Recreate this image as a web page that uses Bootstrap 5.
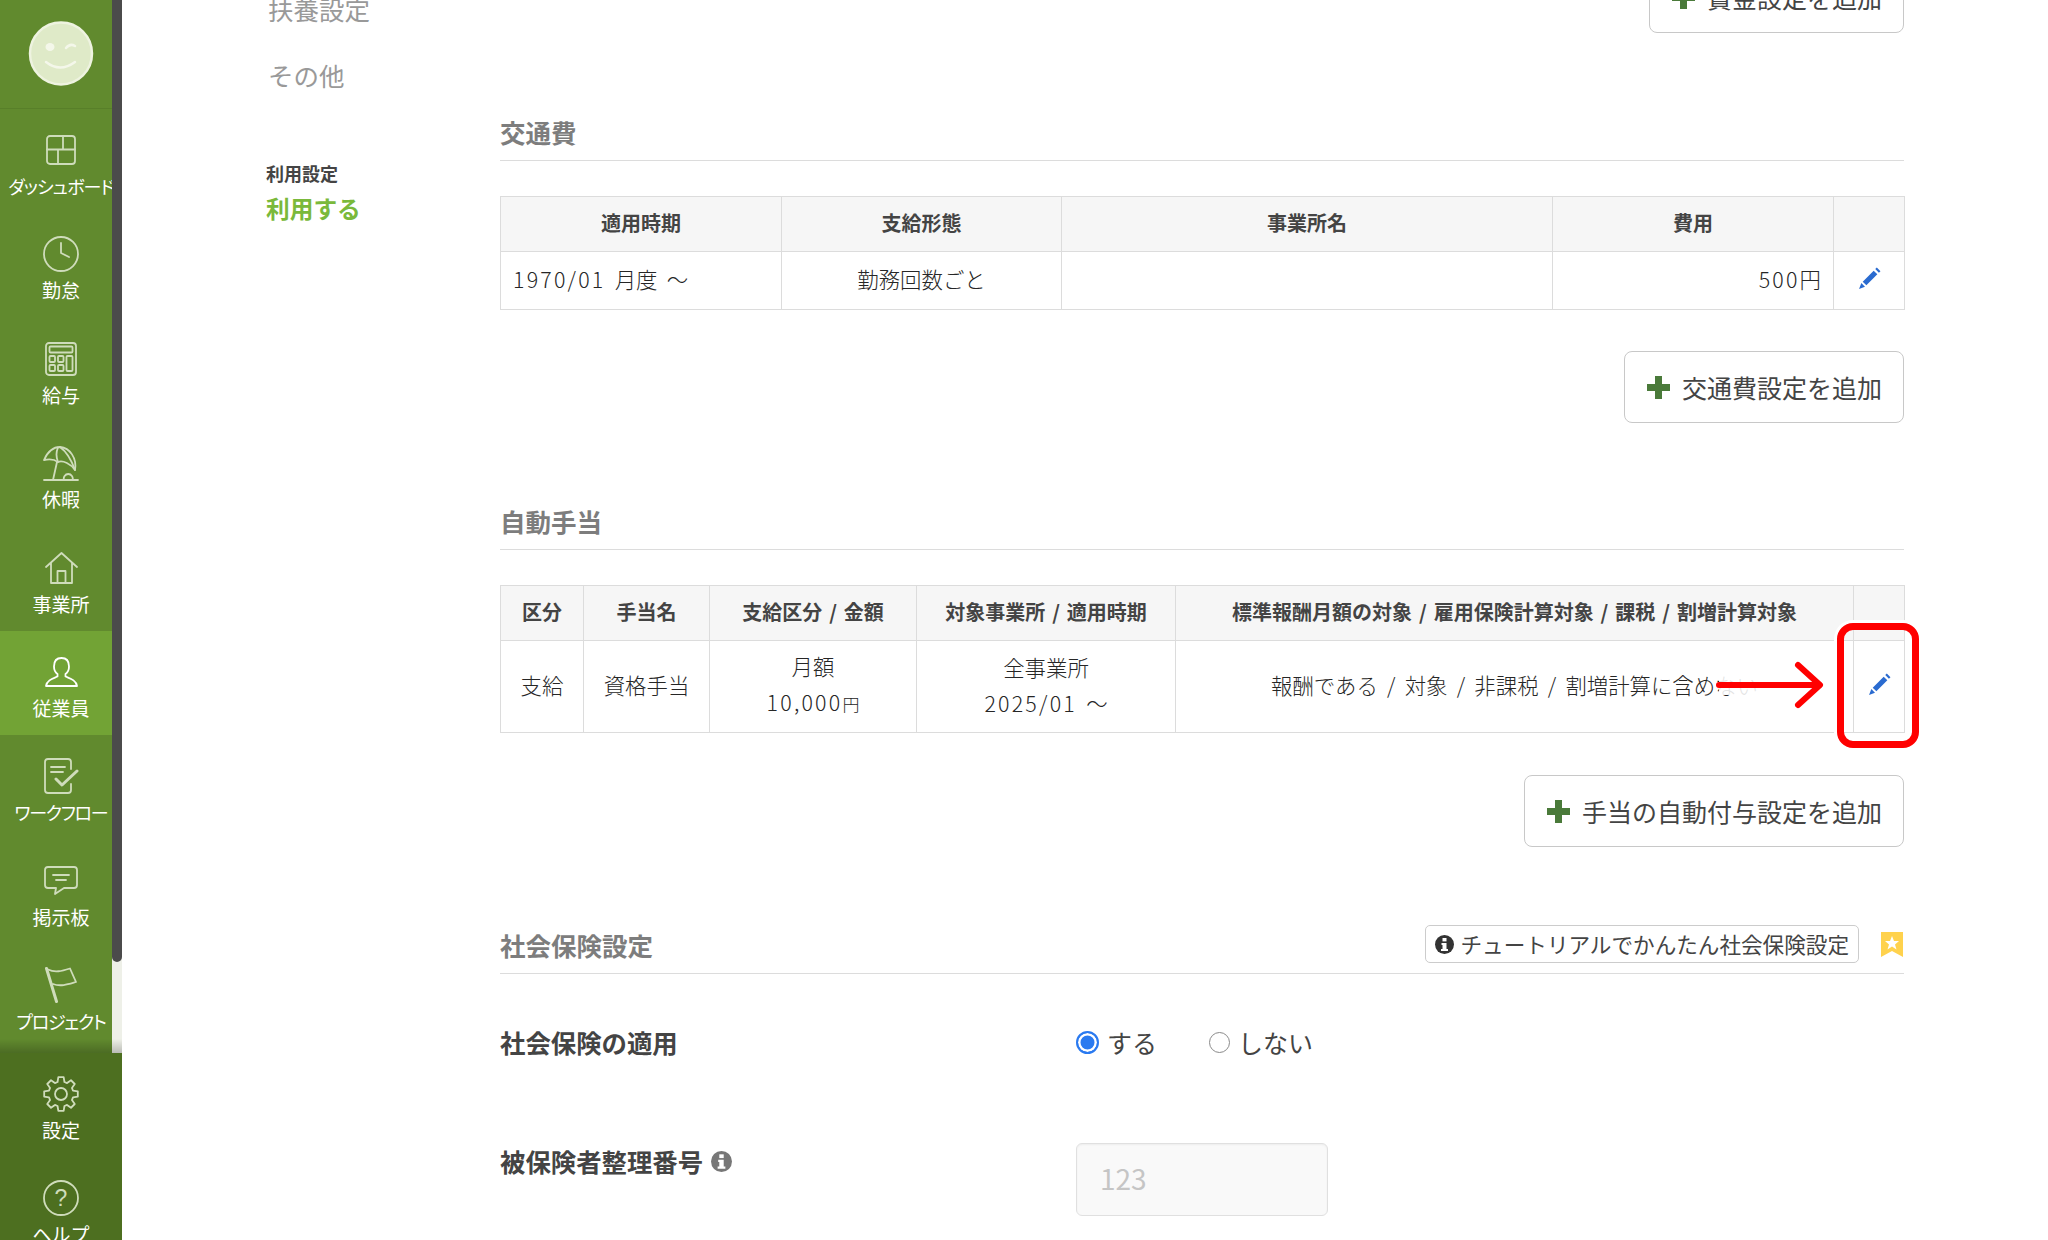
<!doctype html>
<html lang="ja">
<head>
<meta charset="utf-8">
<title>従業員設定</title>
<link rel="stylesheet" href="https://cdn.jsdelivr.net/npm/bootstrap@5.3.0/dist/css/bootstrap.min.css">
<style>
html,body{height:100%;margin:0}
body{font-family:"Noto Sans CJK JP","Noto Sans",sans-serif;color:#333;background:#fff;overflow:hidden}
.shell{height:1240px;overflow:hidden}
.side{width:122px;flex:none;background:#4d6f20;height:1240px;overflow:hidden}
.side-upper{height:1053px;flex:none;position:relative;overflow:hidden;background:#618a2e}
.side-upper::after{content:"";position:absolute;left:0;right:0;bottom:0;height:14px;background:linear-gradient(rgba(0,0,0,0),rgba(0,0,0,.22))}
.logo-box{height:109px;border-bottom:1px solid #587f29;padding-top:21px}
.track{position:absolute;right:0;top:0;bottom:0;width:10px;background:#eef0e8}
.thumb{height:962px;background:#4b4b4b;border-radius:0 0 5px 5px}
.nav-cell{height:104.4px;padding-top:23px;color:#fff;font-size:19px;line-height:24px;white-space:nowrap}
.nav-cell.on{background:#72a335}
.nav-cell .ico-box{height:36px;margin-bottom:6px}
.nav-cell svg{fill:none;stroke:#cfdcbb;stroke-width:1.8;stroke-linecap:round;stroke-linejoin:round;display:block}
.nav-cell.on svg{stroke:#fff}
.wide-label{font-feature-settings:"palt";letter-spacing:-.9px;font-size:18px}
.wide-label-b{font-feature-settings:"palt";letter-spacing:-1.2px;font-size:18px}
.workspace{flex:1 1 auto;min-width:0;margin-top:-39px}
.subnav{width:378px;flex:none;padding:30px 0 0 144px}
.subnav-link{font-size:25.5px;line-height:36px;color:#999;padding-left:2px;margin-bottom:30px}
.use-label{font-size:18px;line-height:24px;font-weight:700;color:#444;margin-top:68px}
.use-value{font-size:23.7px;line-height:32px;font-weight:700;color:#7ab93b;margin-top:7px}
.panel{width:1404px;flex:none;position:relative}
.sechead{height:46px;border-bottom:1px solid #dcdcdc;margin-top:81px}
.sechead-first{margin-top:82px}
.sechead h2{font-size:25.5px;line-height:34px;font-weight:700;color:#7d7d7d;margin:0}
.data-grid{table-layout:fixed;width:1404px;font-size:21.4px;font-weight:300;color:#262626;margin:35px 0 0;border-color:#dcdcdc;--bs-table-color:#262626;--bs-table-border-color:#dcdcdc}
.data-grid th{background:#f6f6f6;font-size:20px;font-weight:700;color:#444;text-align:center;vertical-align:middle;padding:0 0 3px;height:55px;white-space:nowrap;word-spacing:2.4px}
.data-grid td{vertical-align:middle;padding:0 12px 2px;height:58px;text-align:center;white-space:nowrap;color:#262626;word-spacing:4.5px}
.data-grid td.startcell{text-align:left}
.data-grid td.endcell{text-align:right}
.data-grid td.tallcell{height:92px;line-height:36.3px;padding-bottom:3px}
.w-281{width:281px}.w-280{width:280px}.w-491{width:491px}.w-282{width:281px}.w-70{width:71px}
.w-83{width:83px}.w-126{width:126px}.w-207{width:207px}.w-259{width:259px}.w-678{width:678px}.w-51{width:51px}
.yen-small{font-size:17px}
.figs{letter-spacing:2.2px}
.pen{fill:#2a6bd0;display:inline-block;vertical-align:middle;margin-bottom:7px}
.addbtn{font-size:25px;line-height:36px;color:#444;background:#fff;border:1px solid #c8c8c8;border-radius:8px;height:72px;padding:0 21px 0 22px;gap:12px;white-space:nowrap}
.addbtn:hover{background:#fff;color:#444;border-color:#c8c8c8}
.addbtn svg{fill:#4a7a3a;flex:none}
.mt-41{margin-top:41px}
.mt-42{margin-top:42px}
.tutorial{font-size:21.6px;line-height:36px;height:38px;color:#444;background:#fff;border:1px solid #ccc;border-radius:5px;padding:0 9px;gap:7px;white-space:nowrap}
.head-tools{gap:22px;margin-top:-3px;margin-right:1px}
.formrow{font-size:25.4px;line-height:36px}
.formrow-a{margin-top:50px}
.formrow-b{margin-top:83px}
.formlabel{width:576px;flex:none;font-weight:700;color:#444}
.choice{font-size:25px;color:#444;gap:8px}
.choice-gap{margin-left:52px}
.radio-on{appearance:none;width:23px;height:23px;border-radius:50%;background:#2a7af0;border:2px solid #2a7af0;box-shadow:inset 0 0 0 2.5px #fff;margin:0;flex:none}
.radio-off{appearance:none;width:21px;height:21px;border-radius:50%;background:#fff;border:1.5px solid #8a8a8a;margin:0;flex:none}
.numbox{width:252px;height:73px;background:#f9f9f9;border:1px solid #e0e0e0;border-radius:6px;font-size:28px;color:#c5c5c5;padding:0 23px 3px;box-shadow:inset 0 1px 2px rgba(0,0,0,.05)}
.numbox:disabled{background:#f9f9f9;opacity:1}
.numbox::placeholder{color:#c5c5c5;opacity:1}
.callout{position:absolute;left:1337.4px;top:662.3px;width:81.5px;height:124.7px;border:7px solid #f00;border-radius:16px;box-shadow:0 0 0 3px #fff;pointer-events:none}
.pointer{position:absolute;left:1205px;top:694px;width:125px;height:60px;overflow:visible}
</style>
</head>
<body>
<div class="shell d-flex">
  <aside class="side d-flex flex-column">
    <div class="side-upper">
      <div class="logo-box d-flex justify-content-center">
        <svg width="66" height="65" viewBox="0 0 66 65">
          <circle cx="33" cy="32.5" r="31" fill="#dfeac8" stroke="#eef3e0" stroke-width="2.5"/>
          <ellipse cx="22" cy="26" rx="4.5" ry="4" fill="#f4f7ea"/>
          <path d="M38 27 Q42 22 47 25" fill="none" stroke="#f4f7ea" stroke-width="2.5" stroke-linecap="round"/>
          <path d="M18 41 Q32 52 47 41" fill="none" stroke="#f4f7ea" stroke-width="2.5" stroke-linecap="round"/>
        </svg>
      </div>
      <div class="nav-cell d-flex flex-column align-items-center">
        <div class="ico-box d-flex align-items-center"><svg width="30" height="30" viewBox="0 0 30 30"><rect x="1" y="1" width="28" height="28" rx="3"/><path d="M1 14.5H29M17 1V14.5M12 14.5V29"/></svg></div>
        <span class="wide-label">ダッシュボード</span>
      </div>
      <div class="nav-cell d-flex flex-column align-items-center">
        <div class="ico-box d-flex align-items-center"><svg width="36" height="36" viewBox="0 0 36 36"><circle cx="18" cy="18" r="17"/><path d="M18 7V17L26 21"/></svg></div>
        <span>勤怠</span>
      </div>
      <div class="nav-cell d-flex flex-column align-items-center">
        <div class="ico-box d-flex align-items-center"><svg width="32" height="34" viewBox="0 0 32 34"><rect x="1" y="1" width="30" height="32" rx="3"/><rect x="4.500" y="4.500" width="23" height="6" rx="1"/><rect x="4.500" y="14" width="5.500" height="6" rx="1"/><rect x="13" y="14" width="5.500" height="6" rx="1"/><rect x="4.500" y="23" width="5.500" height="6" rx="1"/><rect x="13" y="23" width="5.500" height="6" rx="1"/><rect x="21.500" y="14" width="6" height="15" rx="1"/></svg></div>
        <span>給与</span>
      </div>
      <div class="nav-cell d-flex flex-column align-items-center">
        <div class="ico-box d-flex align-items-center"><svg width="36" height="35" viewBox="0 0 36 35"><path d="M1 14C5 5 11 1 17 1C27 2 34 12 32 24C28 18 20 14 15 16C11 13 6 13 1 14Z"/><path d="M15 1.500C13 6 13 11 15 16M17 1C24 6 28 13 32 24"/><path d="M14 16L10 34M1 34H35"/><path d="M21 34A4.500 4.500 0 1 1 29.500 34"/></svg></div>
        <span>休暇</span>
      </div>
      <div class="nav-cell d-flex flex-column align-items-center">
        <div class="ico-box d-flex align-items-center"><svg width="33" height="32" viewBox="0 0 33 32"><path d="M1 15L16.500 1L32 15M6 11V31H27V11M12.500 31V19H20.500V31"/></svg></div>
        <span>事業所</span>
      </div>
      <div class="nav-cell on d-flex flex-column align-items-center">
        <div class="ico-box d-flex align-items-center"><svg width="33" height="30" viewBox="0 0 33 30"><path d="M16.500 1C11 1 9 5 9 9.500C9 13 11 16 12.500 17V19.500C8 21.500 2 23 1 29H32C31 23 25 21.500 20.500 19.500V17C22 16 24 13 24 9.500C24 5 22 1 16.500 1Z"/></svg></div>
        <span>従業員</span>
      </div>
      <div class="nav-cell d-flex flex-column align-items-center">
        <div class="ico-box d-flex align-items-center"><svg width="35" height="36" viewBox="0 0 35 36"><path d="M27 11V4C27 2 26 1 24 1H4C2 1 1 2 1 4V32C1 34 2 35 4 35H24C26 35 27 34 27 32V26"/><path d="M7 9H21M7 14H19"/><path d="M12 21L18 27L33 13" stroke-width="3"/></svg></div>
        <span class="wide-label-b">ワークフロー</span>
      </div>
      <div class="nav-cell d-flex flex-column align-items-center">
        <div class="ico-box d-flex align-items-center"><svg width="34" height="29" viewBox="0 0 34 29"><path d="M4 1H30C32 1 33 2 33 4V19C33 21 32 22 30 22H20L11 28L12 22H4C2 22 1 21 1 19V4C1 2 2 1 4 1Z"/><path d="M9 9H25M12 14H22"/></svg></div>
        <span>掲示板</span>
      </div>
      <div class="nav-cell d-flex flex-column align-items-center">
        <div class="ico-box d-flex align-items-center"><svg width="33" height="36" viewBox="0 0 33 36"><path d="M1.500 1.500L11.500 34.500" stroke-width="3"/><path d="M3 2.500C10 6 17 4 25 1.500L31 15C24 17 16 20 8 17"/></svg></div>
        <span class="wide-label-b">プロジェクト</span>
      </div>
      <div class="track"><div class="thumb"></div></div>
    </div>
    <div class="nav-cell d-flex flex-column align-items-center flex-shrink-0">
      <div class="ico-box d-flex align-items-center"><svg width="38" height="38" viewBox="-19 -19 38 38"><path d="M-3.450-12L-2.660-16.800L2.660-16.800L3.450-12L6.060-10.930L9.990-13.750L13.750-9.990L10.930-6.060L12-3.450L16.800-2.660L16.800 2.660L12 3.450L10.930 6.060L13.750 9.990L9.990 13.750L6.060 10.930L3.450 12L2.660 16.800L-2.660 16.800L-3.450 12L-6.060 10.930L-9.990 13.750L-13.750 9.990L-10.930 6.060L-12 3.450L-16.800 2.660L-16.800-2.660L-12-3.450L-10.930-6.060L-13.750-9.990L-9.990-13.750L-6.060-10.930Z"/><circle r="6"/></svg></div>
      <span>設定</span>
    </div>
    <div class="nav-cell d-flex flex-column align-items-center flex-shrink-0">
      <div class="ico-box d-flex align-items-center"><svg width="36" height="36" viewBox="0 0 36 36"><circle cx="18" cy="18" r="17"/><text x="18" y="26" text-anchor="middle" font-size="23" fill="#cfdcbb" stroke="none" font-family="Liberation Sans">?</text></svg></div>
      <span>ヘルプ</span>
    </div>
  </aside>

  <main class="workspace d-flex">
    <nav class="subnav">
      <div class="subnav-link">扶養設定</div>
      <div class="subnav-link">その他</div>
      <div class="use-label">利用設定</div>
      <div class="use-value">利用する</div>
    </nav>

    <div class="panel">
      <div class="d-flex justify-content-end">
        <button type="button" class="btn addbtn d-inline-flex align-items-center"><svg width="23" height="23" viewBox="0 0 23 23"><path d="M8 0H15V8H23V15H15V23H8V15H0V8H8Z"/></svg>賞金設定を追加</button>
      </div>

      <div class="sechead sechead-first"><h2>交通費</h2></div>
      <table class="table table-bordered data-grid">
        <colgroup><col class="w-281"><col class="w-280"><col class="w-491"><col class="w-282"><col class="w-70"></colgroup>
        <thead><tr><th>適用時期</th><th>支給形態</th><th>事業所名</th><th>費用</th><th></th></tr></thead>
        <tbody><tr>
          <td class="startcell"><span class="figs">1970/01</span> 月度 ～</td>
          <td>勤務回数ごと</td>
          <td></td>
          <td class="endcell"><span class="figs">500</span>円</td>
          <td><svg class="pen" width="23" height="23" viewBox="0 0 22 22"><path d="M4.500 14L15 3.500L18.500 7L8 17.500ZM16.500 2L18 .5L21.500 4L20 5.500ZM3.200 15.300L6.700 18.800L1 21Z"/></svg></td>
        </tr></tbody>
      </table>
      <div class="d-flex justify-content-end mt-41">
        <button type="button" class="btn addbtn d-inline-flex align-items-center"><svg width="23" height="23" viewBox="0 0 23 23"><path d="M8 0H15V8H23V15H15V23H8V15H0V8H8Z"/></svg>交通費設定を追加</button>
      </div>

      <div class="sechead"><h2>自動手当</h2></div>
      <table class="table table-bordered data-grid">
        <colgroup><col class="w-83"><col class="w-126"><col class="w-207"><col class="w-259"><col class="w-678"><col class="w-51"></colgroup>
        <thead><tr><th>区分</th><th>手当名</th><th>支給区分 / 金額</th><th>対象事業所 / 適用時期</th><th>標準報酬月額の対象 / 雇用保険計算対象 / 課税 / 割増計算対象</th><th></th></tr></thead>
        <tbody><tr>
          <td class="tallcell">支給</td>
          <td class="tallcell">資格手当</td>
          <td class="tallcell">月額<br><span class="figs">10,000</span><span class="yen-small">円</span></td>
          <td class="tallcell">全事業所<br><span class="figs">2025/01</span> ～</td>
          <td class="tallcell">報酬である / 対象 / 非課税 / 割増計算に含めない</td>
          <td class="tallcell"><svg class="pen" width="23" height="23" viewBox="0 0 22 22"><path d="M4.500 14L15 3.500L18.500 7L8 17.500ZM16.500 2L18 .5L21.500 4L20 5.500ZM3.200 15.300L6.700 18.800L1 21Z"/></svg></td>
        </tr></tbody>
      </table>
      <div class="d-flex justify-content-end mt-42">
        <button type="button" class="btn addbtn d-inline-flex align-items-center"><svg width="23" height="23" viewBox="0 0 23 23"><path d="M8 0H15V8H23V15H15V23H8V15H0V8H8Z"/></svg>手当の自動付与設定を追加</button>
      </div>

      <div class="sechead d-flex justify-content-between align-items-start">
        <h2>社会保険設定</h2>
        <div class="head-tools d-flex align-items-center">
          <div class="tutorial d-inline-flex align-items-center">
            <svg width="19" height="19" viewBox="0 0 19 19"><circle cx="9.500" cy="9.500" r="9.500" fill="#333"/><rect x="7.500" y="3" width="4" height="3.400" fill="#fff"/><path d="M6.500 8H11.500V14H13V16H6V14H7.500V10H6.500Z" fill="#fff"/></svg>
            チュートリアルでかんたん社会保険設定
          </div>
          <svg width="22" height="25" viewBox="0 0 22 25"><path d="M0 0H22V25L11 19L0 25Z" fill="#ffd24d"/><path d="M11 4L13 9H18L14 12.500L15.500 17.500L11 14.500L6.500 17.500L8 12.500L4 9H9Z" fill="#fff"/></svg>
        </div>
      </div>

      <div class="formrow formrow-a d-flex">
        <div class="formlabel">社会保険の適用</div>
        <div class="d-flex align-items-center">
          <label class="choice d-inline-flex align-items-center"><input class="radio-on" type="radio" name="shakai" checked>する</label>
          <label class="choice choice-gap d-inline-flex align-items-center"><input class="radio-off" type="radio" name="shakai">しない</label>
        </div>
      </div>
      <div class="formrow formrow-b d-flex">
        <div class="formlabel d-flex align-items-start gap-2">被保険者整理番号
          <svg class="mt-2" width="21" height="21" viewBox="0 0 19 19"><circle cx="9.500" cy="9.500" r="9.500" fill="#777"/><rect x="7.500" y="3" width="4" height="3.400" fill="#fff"/><path d="M6.500 8H11.500V14H13V16H6V14H7.500V10H6.500Z" fill="#fff"/></svg>
        </div>
        <input class="numbox" type="text" placeholder="123" disabled>
      </div>

      <div class="callout"></div>
      <svg class="pointer" viewBox="0 0 125 60">
        <path d="M14 30H64" stroke="#fff" stroke-width="20" opacity=".88" fill="none"/>
        <path d="M14 30H114" stroke="#f00" stroke-width="6" stroke-linecap="round" fill="none"/>
        <path d="M93 10L115 30L93 50" stroke="#f00" stroke-width="6" stroke-linecap="round" stroke-linejoin="round" fill="none"/>
      </svg>
    </div>
  </main>
</div>
<script src="https://cdn.jsdelivr.net/npm/bootstrap@5.3.0/dist/js/bootstrap.bundle.min.js"></script>
</body>
</html>
